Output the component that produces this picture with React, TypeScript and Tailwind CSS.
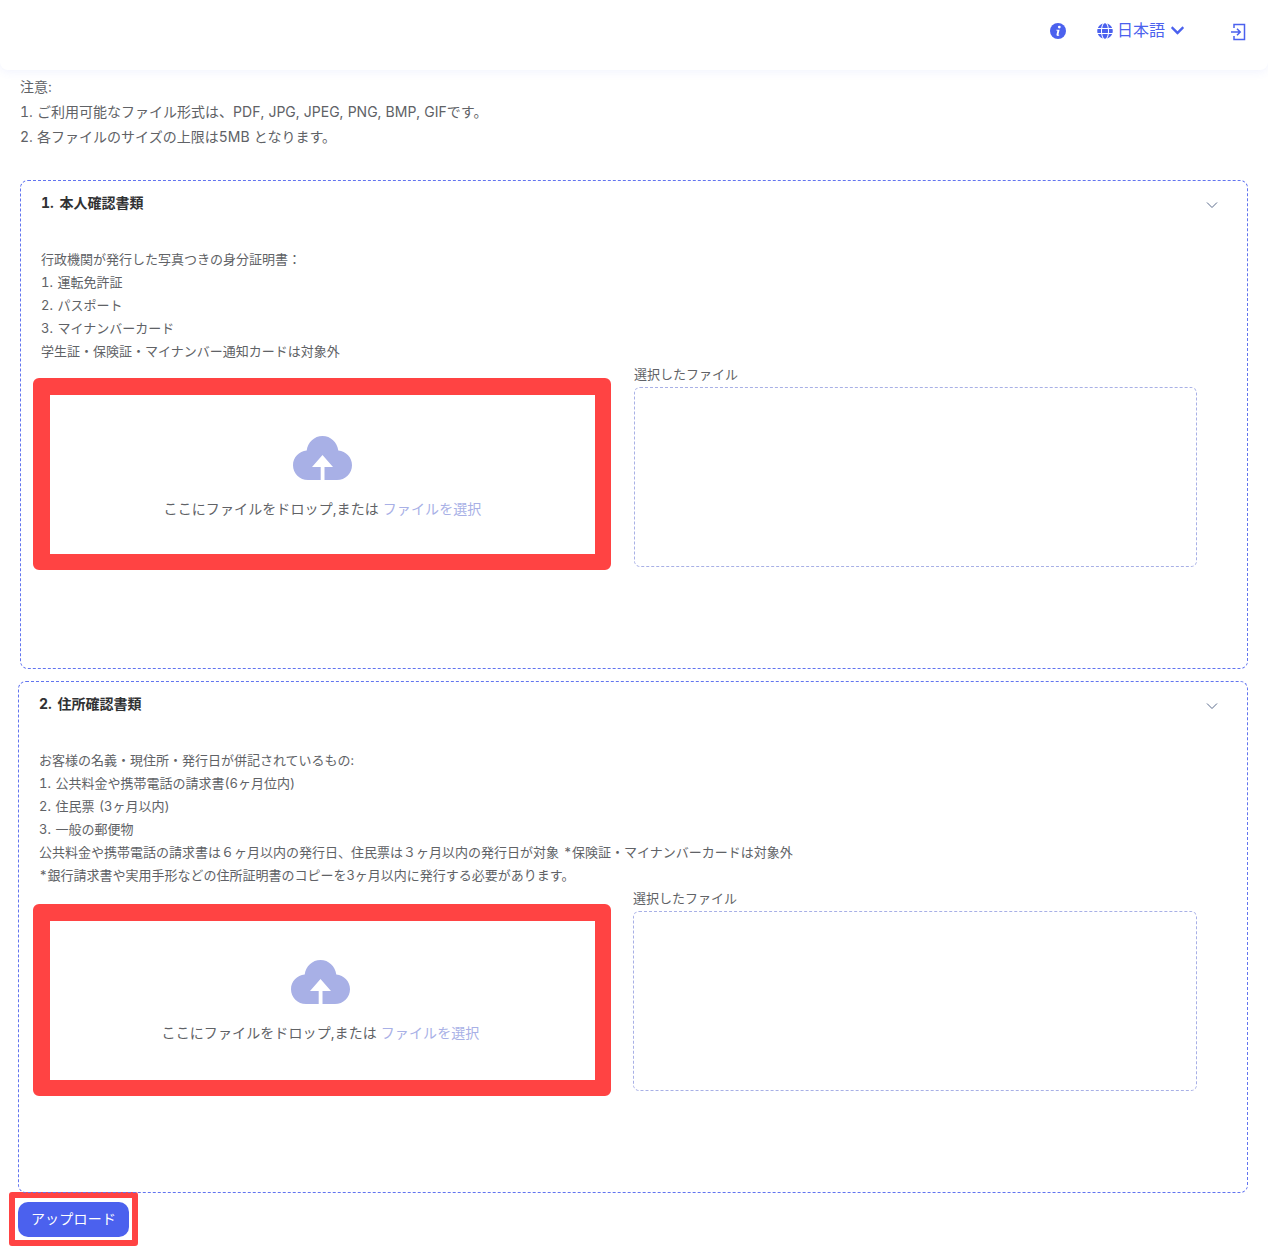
import React from 'react';
import { FaChevronDown, FaGlobe } from 'react-icons/fa';

const InfoIcon = () => (
  <svg width="16" height="16" viewBox="0 0 16 16" aria-hidden="true">
    <circle cx="8" cy="8" r="8" fill="#4b61ee" />
    <circle cx="9.300" cy="4.100" r="1.400" fill="#fff" />
    <path
      d="M6.300 6.700H9.600L8.500 11.300C8.400 11.800 8.700 11.900 9.400 11.700L9.200 12.600C8.400 13 6.200 13.300 6.500 11.600L7.300 7.900C7.400 7.500 7 7.400 6.200 7.500Z"
      fill="#fff"
    />
  </svg>
);

const UploadCloud = () => (
  <svg width="59" height="44" viewBox="0 0 59 44" aria-hidden="true">
    <path
      d="M15 44C6.700 44 0 37.500 0 29.200 0 21.500 6 15.300 13.700 14.600 14.800 6.300 21.300 0 29.500 0 37.700 0 44.200 6.300 45.300 14.600 53 15.300 59 21.500 59 29.200 59 37.500 52.300 44 44 44Z"
      fill="#a8b0e6"
    />
    <path d="M29.500 19 40 31H31.500V44H27.700V31H19Z" fill="#fff" />
  </svg>
);

const LoginIcon = () => (
  <svg width="16" height="18" viewBox="0 0 16 18" fill="none" stroke="#4b61ee" strokeWidth="1.500" aria-hidden="true">
    <path d="M4 5V1.500H14.500V16.500H4V13" />
    <path d="M1 9H10M7 5.800 10.200 9 7 12.200" />
  </svg>
);

const Chevron = () => (
  <svg width="12" height="8" viewBox="0 0 12 8" fill="none" stroke="#5a6b8c" strokeWidth="1" aria-hidden="true">
    <path d="M1 1.500 6 6.500 11 1.500" />
  </svg>
);

type SectionProps = {
  title: string;
  lines: string[];
  cardClass: string;
  dropClass: string;
  dropInnerClass: string;
  fileClass: string;
};

const Section = ({ title, lines, cardClass, dropClass, dropInnerClass, fileClass }: SectionProps) => (
  <section className={`rounded-lg border border-dashed border-[#6274f0] ${cardClass}`}>
    <div className="flex h-[67px] items-start justify-between pl-5 pr-[29px] pt-[12px]">
      <h3 className="text-[14px] font-bold leading-[20px] text-[#303133] [word-spacing:2px]">{title}</h3>
      <span className="mt-[8px]">
        <Chevron />
      </span>
    </div>
    <div className="pl-5 text-[13px] leading-[23px] text-[#606266] [word-spacing:1px]">
      {lines.map((line) => (
        <p key={line}>{line}</p>
      ))}
    </div>
    <div className="mt-[3px] flex items-start">
      <div
        className={`h-[192px] w-[578px] shrink-0 rounded-md border-[16px] border-l-[17px] border-t-[17px] border-[#ff4343] bg-white ${dropClass}`}
      >
        <div className={`flex h-full flex-col items-center ${dropInnerClass}`}>
          <UploadCloud />
          <p className="mt-[19px] text-[14px] leading-[20px] tracking-[0.1px] text-[#606266]">
            ここにファイルをドロップ,または <span className="text-[#a8b0e6]">ファイルを選択</span>
          </p>
        </div>
      </div>
      <div className={fileClass}>
        <p className="text-[13px] leading-[16px] text-[#606266]">選択したファイル</p>
        <div className="mt-[5px] h-[180px] rounded-md border border-dashed border-[#a8b0e6]" />
      </div>
    </div>
  </section>
);

export default function App() {
  return (
    <div
      className="min-h-[1251px] bg-white tabular-nums"
      style={{ fontFamily: 'Inter, "Noto Sans CJK JP", sans-serif' }}
    >
      <header className="flex h-[70px] items-start rounded-b-lg bg-white pt-[21px] text-[#4b61ee] shadow-[0_2px_10px_rgba(75,97,238,0.08)]">
        <div className="ml-auto flex items-center">
          <span className="-mt-[1px]">
            <InfoIcon />
          </span>
          <FaGlobe className="-mt-[1px] ml-[31px] h-4 w-4" />
          <span className="-mt-[3px] ml-[4px] text-[16px] leading-[18px]">日本語</span>
          <FaChevronDown className="-mt-[1px] ml-[5px] h-[15px] w-[15px]" />
          <span className="ml-[45px] mr-[22px] mt-[2px]">
            <LoginIcon />
          </span>
        </div>
      </header>

      <div className="px-5 pt-[4px] text-[14px] leading-[25px] text-[#606266] [word-spacing:0.5px]">
        <p>注意:</p>
        <p>1. ご利用可能なファイル形式は、PDF, JPG, JPEG, PNG, BMP, GIFです。</p>
        <p>2. 各ファイルのサイズの上限は5MB となります。</p>
      </div>

      <div className="mt-[31px] flex flex-col gap-3 pr-5">
        <Section
          title="1. 本人確認書類"
          lines={[
            '行政機関が発行した写真つきの身分証明書：',
            '1. 運転免許証',
            '2. パスポート',
            '3. マイナンバーカード',
            '学生証・保険証・マイナンバー通知カードは対象外',
          ]}
          cardClass="ml-5 h-[489px]"
          dropClass="ml-3 mt-3"
          dropInnerClass="pt-[41px]"
          fileClass="ml-[23px] mr-[50px] flex-1"
        />
        <Section
          title="2. 住所確認書類"
          lines={[
            'お客様の名義・現住所・発行日が併記されているもの:',
            '1. 公共料金や携帯電話の請求書(6ヶ月位内)',
            '2. 住民票 (3ヶ月以内)',
            '3. 一般の郵便物',
            '公共料金や携帯電話の請求書は６ヶ月以内の発行日、住民票は３ヶ月以内の発行日が対象 *保険証・マイナンバーカードは対象外',
            '*銀行請求書や実用手形などの住所証明書のコピーを3ヶ月以内に発行する必要があります。',
          ]}
          cardClass="ml-[18px] h-[512px]"
          dropClass="ml-[14px] mt-[14px]"
          dropInnerClass="pr-[4px] pt-[39px]"
          fileClass="ml-[22px] mr-[50px] flex-1"
        />
      </div>

      <div className="-mt-px ml-[9px] w-[129px] rounded-[3px] border-[6px] border-[#ff4343] pb-[3px] pl-[3px] pt-[4px]">
        <button className="block h-[35px] w-[111px] rounded-[10px] bg-[#4b61ee] pb-[3px] text-[14px] tracking-[0.2px] text-white">
          アップロード
        </button>
      </div>
    </div>
  );
}
